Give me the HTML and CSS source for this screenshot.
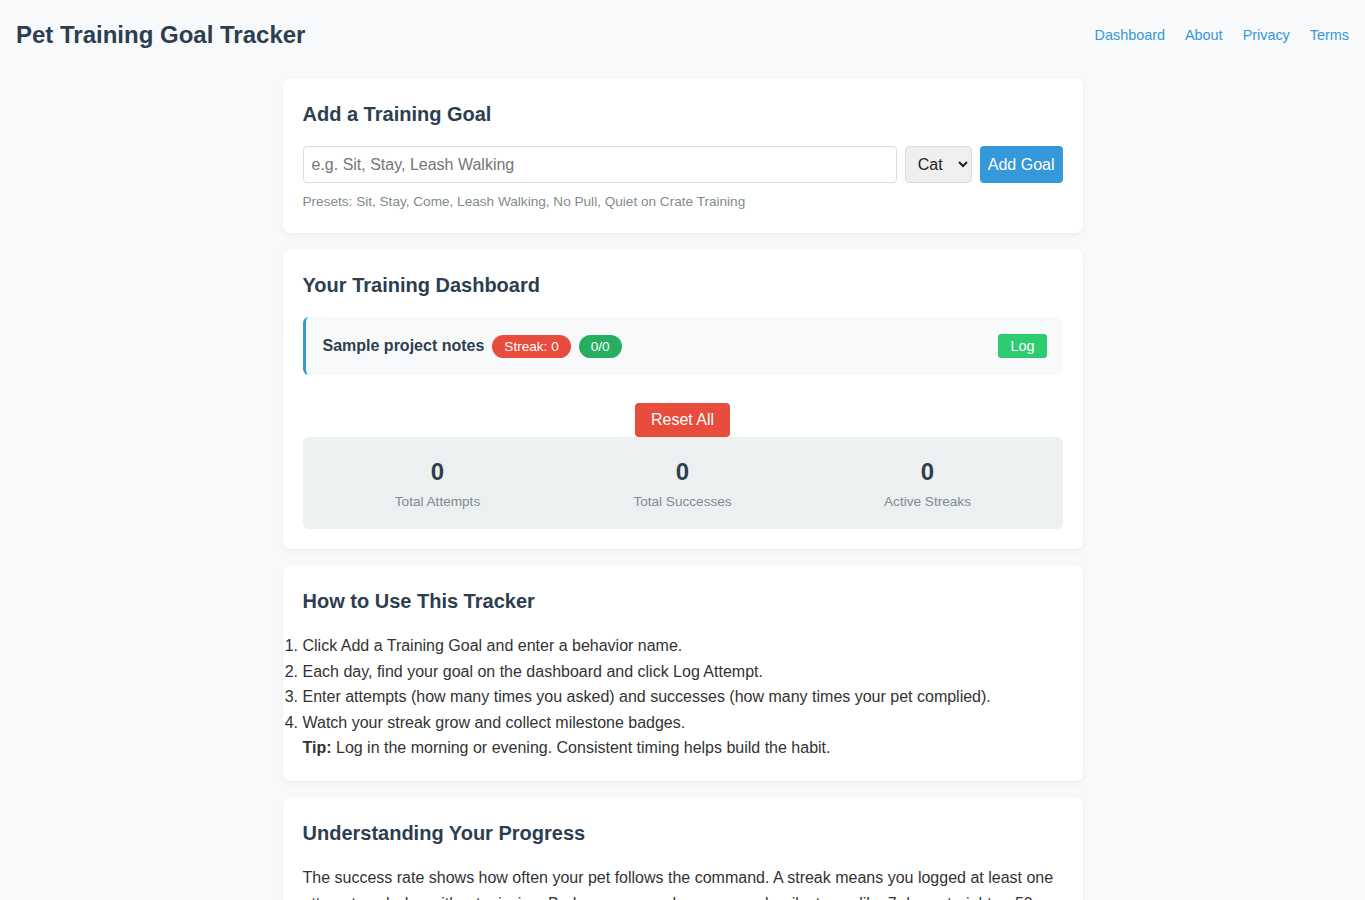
FILE: index.html
```html
<!DOCTYPE html>
<html lang="en">
<head>
    <meta charset="UTF-8">
    <meta name="viewport" content="width=device-width, initial-scale=1.0">
    <title>Pet Training Goal Tracker</title>
    <link rel="stylesheet" href="styles.css">
</head>
<body>
    <header class="site-header">
        <h1>Pet Training Goal Tracker</h1>
        <nav class="site-nav">
            <a href="#">Dashboard</a>
            <a href="#">About</a>
            <a href="#">Privacy</a>
            <a href="#">Terms</a>
        </nav>
    </header>

    <main class="container">
        <section class="card">
            <h2>Add a Training Goal</h2>
            <form class="goal-form" onsubmit="return false;">
                <input type="text" class="goal-input" placeholder="e.g. Sit, Stay, Leash Walking">
                <select class="pet-select">
                    <option>Cat</option>
                    <option>Dog</option>
                </select>
                <button type="submit" class="btn btn-primary">Add Goal</button>
            </form>
            <p class="hint">Presets: Sit, Stay, Come, Leash Walking, No Pull, Quiet on Crate Training</p>
        </section>

        <section class="card">
            <h2>Your Training Dashboard</h2>
            <div class="goal-item">
                <div class="goal-info">
                    <span class="goal-name">Sample project notes</span>
                    <span class="badge badge-streak">Streak: 0</span>
                    <span class="badge badge-rate">0/0</span>
                </div>
                <button class="btn btn-log">Log</button>
            </div>

            <div class="reset-row">
                <button class="btn btn-danger">Reset All</button>
            </div>
            <div class="stats">
                <div class="stat">
                    <div class="stat-value">0</div>
                    <div class="stat-label">Total Attempts</div>
                </div>
                <div class="stat">
                    <div class="stat-value">0</div>
                    <div class="stat-label">Total Successes</div>
                </div>
                <div class="stat">
                    <div class="stat-value">0</div>
                    <div class="stat-label">Active Streaks</div>
                </div>
            </div>
        </section>

        <section class="card">
            <h2>How to Use This Tracker</h2>
            <ol class="steps">
                <li>Click Add a Training Goal and enter a behavior name.</li>
                <li>Each day, find your goal on the dashboard and click Log Attempt.</li>
                <li>Enter attempts (how many times you asked) and successes (how many times your pet complied).</li>
                <li>Watch your streak grow and collect milestone badges.</li>
            </ol>
            <p class="tip"><strong>Tip:</strong> Log in the morning or evening. Consistent timing helps build the habit.</p>
        </section>

        <section class="card">
            <h2>Understanding Your Progress</h2>
            <p class="text">The success rate shows how often your pet follows the command. A streak means you logged at least one attempt each day without missing. Badges appear when you reach milestones like 7 days straight or 50 successful attempts.</p>
        </section>
    </main>
</body>
</html>
```

FILE: styles.css
```css
* {
    margin: 0;
    padding: 0;
    box-sizing: border-box;
}

body {
    font-family: "Liberation Sans", Arial, Helvetica, sans-serif;
    background: #f8f9fa;
    color: #333;
}

/* top bar */
.site-header {
    display: flex;
    align-items: center;
    justify-content: space-between;
    padding: 21px 16px 17px;
}

.site-header h1 {
    color: #2c3e50;
    font-size: 24px;
    font-weight: 700;
    line-height: 28px;
}

.site-nav {
    display: flex;
    gap: 20px;
}

.site-nav a {
    color: #3498db;
    font-size: 14.4px;
    text-decoration: none;
}

/* cards */
.container {
    max-width: 800px;
    margin: 12px auto 0;
    display: flex;
    flex-direction: column;
    gap: 16px;
}

.card {
    background: #fff;
    border-radius: 8px;
    padding: 20px;
    box-shadow: 0 2px 6px rgba(0, 0, 0, 0.05);
}

.card h2 {
    color: #2c3e50;
    font-size: 20px;
    font-weight: 700;
    line-height: 24px;
    margin: 4px 0 20px;
}

/* add goal form */
.goal-form {
    display: flex;
    gap: 8px;
}

.goal-input {
    flex: 1;
    height: 37px;
    padding: 8px;
    border: 1px solid #ddd;
    border-radius: 4px;
    font-family: inherit;
    font-size: 16px;
    color: #333;
}

.goal-input::placeholder {
    color: #757575;
}

.pet-select {
    height: 37px;
    padding: 0 4px 0 8px;
    width: 67px;
    border: 1px solid #ddd;
    border-radius: 4px;
    background: #efefef;
    font-family: inherit;
    font-size: 16px;
    color: #222;
}

.btn {
    border: none;
    border-radius: 4px;
    color: #fff;
    font-family: inherit;
    cursor: pointer;
}

.btn-primary {
    height: 37px;
    padding: 0 8px;
    background: #3498db;
    font-size: 16px;
}

.hint {
    margin-top: 11px;
    font-size: 13.6px;
    line-height: 16px;
    color: #7f8c8d;
    padding-bottom: 3px;
}

/* dashboard */
.goal-item {
    display: flex;
    align-items: center;
    justify-content: space-between;
    height: 58px;
    padding: 0 16px 0 17px;
    background: #f8f9fa;
    border-left: 3px solid #3498db;
    border-radius: 6px;
}

.goal-info {
    display: flex;
    align-items: center;
    gap: 8px;
}

.goal-name {
    font-size: 16px;
    font-weight: 700;
    color: #2c3e50;
}

.badge {
    display: inline-block;
    padding: 4px 12px;
    border-radius: 12px;
    font-size: 13.6px;
    line-height: 15px;
    color: #fff;
}

.badge-streak {
    background: #e74c3c;
}

.badge-rate {
    background: #27ae60;
}

.btn-log {
    height: 24px;
    padding: 0 12px;
    background: #2ecc71;
    border-radius: 3px;
    font-size: 14.4px;
}

.reset-row {
    display: flex;
    justify-content: center;
    margin-top: 28px;
}

.btn-danger {
    height: 34px;
    padding: 0 16px;
    background: #e74c3c;
    font-size: 16px;
}

.stats {
    display: grid;
    grid-template-columns: repeat(3, 1fr);
    gap: 15px;
    padding: 20px;
    background: #ecf0f1;
    border-radius: 6px;
    text-align: center;
}

.stat-value {
    font-size: 24px;
    font-weight: 700;
    line-height: 29px;
    color: #2c3e50;
}

.stat-label {
    margin-top: 8px;
    font-size: 13.6px;
    line-height: 15px;
    color: #7f8c8d;
}

/* help text */
.steps {
    padding-left: 0;
    font-size: 16px;
    line-height: 25.6px;
}

.tip {
    font-size: 16px;
    line-height: 25.6px;
}

.text {
    font-size: 16px;
    line-height: 25.6px;
}
```
